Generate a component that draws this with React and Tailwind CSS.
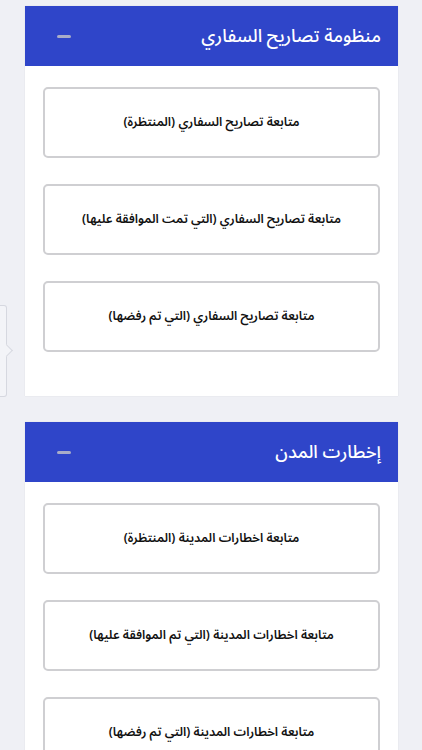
const sections = [
  {
    title: "منظومة تصاريح السفاري",
    items: [
      "متابعة تصاريح السفاري (المنتظرة)",
      "متابعة تصاريح السفاري (التي تمت الموافقة عليها)",
      "متابعة تصاريح السفاري (التي تم رفضها)",
    ],
  },
  {
    title: "إخطارت المدن",
    items: [
      "متابعة اخطارات المدينة (المنتظرة)",
      "متابعة اخطارات المدينة (التي تم الموافقة عليها)",
      "متابعة اخطارات المدينة (التي تم رفضها)",
    ],
  },
];

export default function App() {
  return (
    <div
      dir="rtl"
      className="relative h-[750px] overflow-hidden bg-[#eff0f5] pt-[6px] font-['Noto_Sans_Arabic','DejaVu_Sans',sans-serif]"
    >
      {/* side tab */}
      <div className="absolute left-0 top-[305px] w-[7px] h-[92px] border border-l-0 border-[#d6d8e0] rounded-r-[3px] bg-[#f3f4f8]">
        <div className="absolute right-[-5px] top-[40px] w-[9px] h-[9px] rotate-45 border-t border-r border-[#d6d8e0] bg-[#f3f4f8]" />
      </div>

      <div className="flex flex-col gap-[26px] pr-[24px] pl-[25px]">
        {sections.map((s) => (
          <div key={s.title} className="bg-white shadow-[0_0_1px_rgba(0,0,0,0.12)]">
            {/* HEADER */}
            <div className="h-[60px] bg-[#2f45c9] flex items-center justify-between pr-[17px] pl-[32px]">
              <h2 className="text-white text-[18px] leading-none font-medium">{s.title}</h2>
              <div className="w-[14px] h-[3px] rounded-sm bg-[#a9adc8]" />
            </div>

            {/* BODY */}
            <div className="flex flex-col gap-[26px] pt-[21px] pb-[44px] px-[18px]">
              {s.items.map((it) => (
                <button
                  key={it}
                  className="h-[71px] w-full bg-white border-2 border-[#cfcfd2] rounded-[5px] flex items-center justify-center text-[12.5px] font-semibold text-[#111]"
                >
                  {it}
                </button>
              ))}
            </div>
          </div>
        ))}
      </div>
    </div>
  );
}
